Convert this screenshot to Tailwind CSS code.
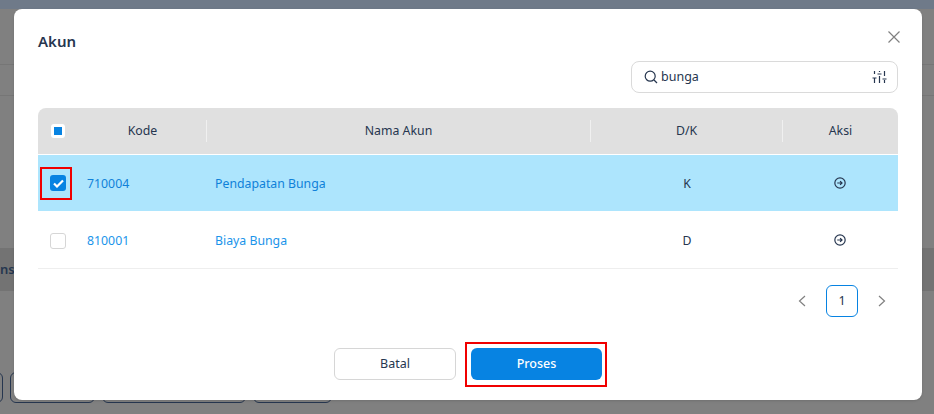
<!DOCTYPE html>
<html>
<head>
<meta charset="utf-8">
<script src="https://cdn.jsdelivr.net/npm/@tailwindcss/browser@4"></script>
</head>
<body class="relative w-[934px] h-[414px] overflow-hidden bg-[#808080] font-['Noto_Sans',sans-serif] text-[13px] text-[#26364f]">
  <!-- dimmed page behind the modal -->
  <div class="h-[9px] bg-[#6f7a89]"></div>
  <div class="h-[56px] border-b border-[#767676]"></div>
  <div class="h-[31px] border-b border-[#767676]"></div>
  <div class="mt-[152px] h-[43px] bg-[#737373] flex items-center text-[#25364f] font-semibold text-[13px]"><span>ns</span></div>
  <div class="mt-[81px] flex gap-[7px] -ml-[60px]">
    <div class="w-[63px] h-[31px] rounded-md border border-[#26364f]"></div>
    <div class="w-[85px] h-[31px] rounded-md border border-[#26364f]"></div>
    <div class="w-[144px] h-[31px] rounded-md border border-[#26364f]"></div>
    <div class="w-[79px] h-[31px] rounded-md border border-[#26364f]"></div>
  </div>

  <!-- modal -->
  <div class="absolute left-[14px] top-[9px] w-[908px] h-[391px] bg-white rounded-lg px-6 shadow-sm flex flex-col">
    <div class="h-[52px] flex items-center justify-between pt-[13px]">
      <h2 class="text-[15px] font-semibold text-[#26364f]">Akun</h2>
      <svg class="w-[14px] h-[14px] -mr-[3px] -mt-[9px]" viewBox="0 0 14 14" fill="none" stroke="#808080" stroke-width="1.2"><path d="M1.5 1.5l11 11M12.5 1.5l-11 11"/></svg>
    </div>
    <div class="flex justify-end h-[47px]">
      <div class="w-[267px] h-[32px] rounded-lg border border-[#dadada] flex items-center pl-[12px] pr-[10px] gap-[3px]">
        <svg class="w-[14px] h-[14px] shrink-0" viewBox="0 0 14 14" fill="none" stroke="#26364f" stroke-width="1.2"><circle cx="6.2" cy="6.2" r="5"/><path d="M10 10l3 3"/></svg>
        <span class="text-[12.5px] flex-1">bunga</span>
        <svg class="w-[15px] h-[14px]" viewBox="0 0 15 14" fill="none" stroke="#26364f" stroke-width="1.2"><path d="M2.5 1v3M2.5 8v5M7.5 1v1M7.5 6v7M12.5 1v5M12.5 10v3M.5 8h4M5.5 4h4M10.5 9h4"/></svg>
      </div>
    </div>

    <!-- table -->
    <div class="flex h-[47px] rounded-t-lg bg-[#e0e0e0] items-center text-[12.3px] border-b border-white">
      <div class="w-[40px] flex justify-center"><span class="w-[14px] h-[14px] rounded-[3px] bg-white flex items-center justify-center -ml-[1px]"><span class="w-[8px] h-[8px] bg-[#0783e2]"></span></span></div>
      <div class="w-[129px] text-center pl-[1px] h-[22px] leading-[22px] border-r border-[#f0f0f0]">Kode</div>
      <div class="w-[384px] text-center h-[22px] leading-[22px] border-r border-[#f0f0f0]">Nama Akun</div>
      <div class="w-[192px] text-center h-[22px] leading-[22px] border-r border-[#f0f0f0]">D/K</div>
      <div class="flex-1 text-center">Aksi</div>
    </div>
    <div class="flex h-[56px] bg-[#ade5fd] items-center text-[12.3px]">
      <div class="w-[40px] flex justify-center"><span class="w-4 h-4 rounded-[3px] bg-[#0783e2] flex items-center justify-center"><svg class="w-[11px] h-[9px]" viewBox="0 0 11 9" fill="none" stroke="#fff" stroke-width="2.2"><path d="M1 4.5l3 3L10 1.5"/></svg></span></div>
      <div class="w-[129px] pl-[9px] pt-[2px] text-[#0f81d9]">710004</div>
      <div class="w-[384px] pl-[8px] pt-[2px] text-[#0f81d9]">Pendapatan Bunga</div>
      <div class="w-[192px] text-center pt-[2px]">K</div>
      <div class="flex-1 flex justify-center"><svg class="w-[12px] h-[12px] -ml-[1px]" viewBox="0 0 13 13" fill="none" stroke="#26364f" stroke-width="1.3"><circle cx="6.5" cy="6.5" r="5.6"/><path d="M3.5 6.5h5M6.6 4.4l2.1 2.1-2.1 2.1"/></svg></div>
    </div>
    <div class="flex h-[58px] bg-white border-b border-[#eeeeee] items-center text-[12.3px] pt-[2px]">
      <div class="w-[40px] flex justify-center"><span class="w-4 h-4 rounded-[3px] border border-[#d6d6d6] bg-white"></span></div>
      <div class="w-[129px] pl-[9px] pt-[2px] text-[#1a94ea]">810001</div>
      <div class="w-[384px] pl-[8px] pt-[2px] text-[#1a94ea]">Biaya Bunga</div>
      <div class="w-[192px] text-center pt-[2px]">D</div>
      <div class="flex-1 flex justify-center"><svg class="w-[12px] h-[12px] -ml-[1px] -mt-[2px]" viewBox="0 0 13 13" fill="none" stroke="#26364f" stroke-width="1.3"><circle cx="6.5" cy="6.5" r="5.6"/><path d="M3.5 6.5h5M6.6 4.4l2.1 2.1-2.1 2.1"/></svg></div>
    </div>

    <!-- pagination -->
    <div class="flex justify-end items-center mt-[16px] h-[32px] text-[12.5px]">
      <svg class="w-[8px] h-[12px]" viewBox="0 0 8 12" fill="none" stroke="#808080" stroke-width="1.2"><path d="M7 1L1.5 6 7 11"/></svg>
      <div class="w-[32px] h-[32px] ml-[20px] rounded-md border border-[#0783e2] flex items-center justify-center">1</div>
      <svg class="w-[8px] h-[12px] ml-[20px] mr-[12px]" viewBox="0 0 8 12" fill="none" stroke="#808080" stroke-width="1.2"><path d="M1 1l5.5 5L1 11"/></svg>
    </div>

    <!-- actions -->
    <div class="flex justify-center gap-[15px] mt-[31px] text-[12.5px]">
      <button class="w-[122px] h-[32px] rounded-md border border-[#d6d6d6] bg-white text-[#26364f]">Batal</button>
      <button class="w-[131px] h-[32px] rounded-md bg-[#0783e2] text-white font-medium">Proses</button>
    </div>
  </div>

  <!-- red annotation boxes -->
  <div class="absolute left-[40px] top-[167px] w-[32px] h-[33px] border-2 border-[#f00000]"></div>
  <div class="absolute left-[465px] top-[342px] w-[142px] h-[45px] border-2 border-[#f00000]"></div>
</body>
</html>
